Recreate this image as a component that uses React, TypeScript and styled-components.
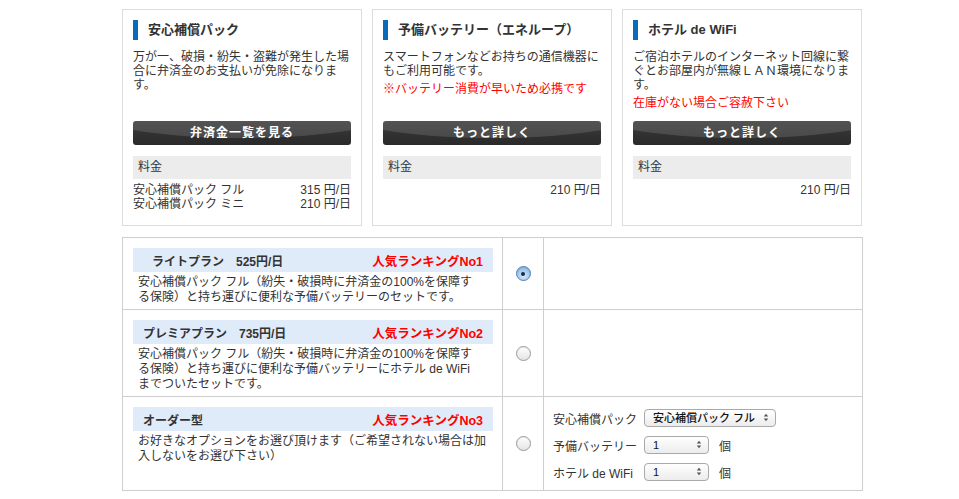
import styled, { createGlobalStyle } from 'styled-components';

const GlobalStyle = createGlobalStyle`
	html, body {
		margin: 0;
		padding: 0;
		background: #fff;
	}
	body {
		font-family: "Liberation Sans", "Noto Sans CJK JP", sans-serif;
		color: #333;
		font-size: 12px;
	}
`

interface Option {
	title: string;
	lines: string[];
	note?: string;
	button: string;
	fees: { name: string; price: string }[];
}

const options: Option[] = [
	{
		title: '安心補償パック',
		lines: ['万が一、破損・紛失・盗難が発生した場合に弁済金のお支払いが免除になります。'],
		button: '弁済金一覧を見る',
		fees: [
			{ name: '安心補償パック フル', price: '315 円/日' },
			{ name: '安心補償パック ミニ', price: '210 円/日' },
		],
	},
	{
		title: '予備バッテリー（エネループ）',
		lines: ['スマートフォンなどお持ちの通信機器にもご利用可能です。'],
		note: '※バッテリー消費が早いため必携です',
		button: 'もっと詳しく',
		fees: [{ name: '', price: '210 円/日' }],
	},
	{
		title: 'ホテル de WiFi',
		lines: ['ご宿泊ホテルのインターネット回線に繋ぐとお部屋内が無線ＬＡＮ環境になります。'],
		note: '在庫がない場合ご容赦下さい',
		button: 'もっと詳しく',
		fees: [{ name: '', price: '210 円/日' }],
	},
]

const plans = [
	{
		name: 'ライトプラン　525円/日',
		rank: '人気ランキングNo1',
		desc: [
			'安心補償パック フル（紛失・破損時に弁済金の100%を保障す',
			'る保険）と持ち運びに便利な予備バッテリーのセットです。',
		],
		indent: 19,
		checked: true,
	},
	{
		name: 'プレミアプラン　735円/日',
		rank: '人気ランキングNo2',
		desc: [
			'安心補償パック フル（紛失・破損時に弁済金の100%を保障す',
			'る保険）と持ち運びに便利な予備バッテリーにホテル de WiFi',
			'までついたセットです。',
		],
		indent: 10,
		checked: false,
	},
	{
		name: 'オーダー型',
		rank: '人気ランキングNo3',
		desc: [
			'お好きなオプションをお選び頂けます（ご希望されない場合は加',
			'入しないをお選び下さい）',
		],
		indent: 10,
		checked: false,
		order: true,
	},
]

const orderRows = [
	{ label: '安心補償パック', value: '安心補償パック フル', width: 132, unit: '' },
	{ label: '予備バッテリー', value: '1', width: 65, unit: '個' },
	{ label: 'ホテル de WiFi', value: '1', width: 65, unit: '個' },
]

const SelectArrows = () => (
	<svg width="6" height="9" viewBox="0 0 6 9">
		<path d="M3 0.8 L5.2 3.6 H0.8 Z" fill="#555" />
		<path d="M3 8.2 L5.2 5.4 H0.8 Z" fill="#555" />
	</svg>
)

export default function App() {
	return (
		<Page>
			<GlobalStyle />
			<Cards>
				{options.map((o) => (
					<Card key={o.title}>
						<CardTitle>{o.title}</CardTitle>
						<CardBody>
							{o.lines.map((l) => <p key={l}>{l}</p>)}
							{o.note && <Note>{o.note}</Note>}
						</CardBody>
						<DarkButton><span>{o.button}</span></DarkButton>
						<FeeHead>料金</FeeHead>
						<FeeList>
							{o.fees.map((f) => (
								<FeeRow key={f.price + f.name}>
									<span>{f.name}</span>
									<span>{f.price}</span>
								</FeeRow>
							))}
						</FeeList>
					</Card>
				))}
			</Cards>

			<PlanTable>
				<colgroup>
					<col style={{ width: 380 }} />
					<col style={{ width: 41 }} />
					<col style={{ width: 319 }} />
				</colgroup>
				<tbody>
					{plans.map((p) => (
						<tr key={p.name}>
							<PlanCell>
								<PlanBand $indent={p.indent}>
									<span>{p.name}</span>
									<Rank>{p.rank}</Rank>
								</PlanBand>
								<PlanDesc>
									{p.desc.map((line) => <span key={line}>{line}</span>)}
								</PlanDesc>
							</PlanCell>
							<RadioCell>
								<Radio $checked={p.checked} />
							</RadioCell>
							<OptionCell>
								{p.order && orderRows.map((r) => (
									<OptionRow key={r.label}>
										<OptionLabel>{r.label}</OptionLabel>
										<SelectWrap $width={r.width}>
											<FakeSelect defaultValue={r.value}>
												<option value={r.value}>{r.value}</option>
											</FakeSelect>
											<ArrowBox><SelectArrows /></ArrowBox>
										</SelectWrap>
										{r.unit && <Unit>{r.unit}</Unit>}
									</OptionRow>
								))}
							</OptionCell>
						</tr>
					))}
				</tbody>
			</PlanTable>
		</Page>
	)
}

const Page = styled.div`
	width: 740px;
	margin-left: 122px;
	padding-top: 9px;
`

const Cards = styled.div`
	display: grid;
	grid-template-columns: repeat(3, 240px);
	column-gap: 10px;
`

const Card = styled.div`
	box-sizing: border-box;
	height: 217px;
	border: 1px solid #dcdcdc;
	padding: 10px;
	display: flex;
	flex-direction: column;
`

const CardTitle = styled.h3`
	margin: 0;
	height: 20px;
	line-height: 20px;
	border-left: 5px solid #0a6bbd;
	padding-left: 10px;
	font-size: 13px;
	font-weight: bold;
	color: #333;
`

const CardBody = styled.div`
	height: 71px;
	padding-top: 10px;
	font-size: 12px;
	line-height: 14px;
	color: #333;

	p {
		margin: 0;
	}
`

const Note = styled.p`
	&& {
		margin-top: 4px;
	}
	color: #ff0000;
`

const DarkButton = styled.div`
	position: relative;
	overflow: hidden;
	height: 24px;
	line-height: 24px;
	border-radius: 3px;
	background: linear-gradient(#3a3a3a, #2a2a2a);
	color: #fff;
	font-weight: bold;
	font-size: 12px;
	letter-spacing: 1px;
	text-align: center;

	&::before {
		content: '';
		position: absolute;
		left: -25%;
		top: -190%;
		width: 150%;
		height: 260%;
		border-radius: 50%;
		background: rgba(255, 255, 255, 0.13);
	}

	span {
		position: relative;
	}
`

const FeeHead = styled.div`
	margin-top: 11px;
	height: 23px;
	line-height: 23px;
	background: #ececec;
	padding-left: 5px;
	font-size: 12px;
`

const FeeList = styled.div`
	margin-top: 4px;
	font-size: 12px;
	line-height: 14px;
`

const FeeRow = styled.div`
	display: flex;
	justify-content: space-between;
`

const PlanTable = styled.table`
	margin-top: 11px;
	width: 740px;
	table-layout: fixed;
	border-collapse: collapse;

	td {
		border: 1px solid #cfcfcf;
		vertical-align: top;
	}
`

const PlanCell = styled.td`
	padding: 10px 9px 4px 10px;
`

const PlanBand = styled.div<{ $indent: number }>`
	display: flex;
	justify-content: space-between;
	align-items: center;
	height: 24px;
	padding: 0 10px 0 ${(p) => p.$indent}px;
	background: #e0ebfa;
	font-size: 12px;
	font-weight: bold;
	color: #333;
`

const Rank = styled.span`
	color: #ff0000;
	font-size: 12.5px;
	font-weight: bold;
`

const PlanDesc = styled.p`
	margin: 3px 0 0;
	padding: 0 0 0 5px;
	display: flex;
	flex-direction: column;
	font-size: 12px;
	line-height: 15px;
	color: #333;

	span {
		white-space: nowrap;
	}
`

const RadioCell = styled.td`
	&& {
		vertical-align: middle;
		text-align: center;
	}
`

const Radio = styled.span<{ $checked: boolean }>`
	display: inline-flex;
	align-items: center;
	justify-content: center;
	vertical-align: middle;
	width: 13px;
	height: 13px;
	border-radius: 50%;
	border: 1px solid ${(p) => (p.$checked ? '#5a7fb0' : '#9a9a9a')};
	background: ${(p) =>
		p.$checked
			? 'radial-gradient(circle at 50% 70%, #d6e8fc, #8fbbea 75%)'
			: 'linear-gradient(#ffffff, #e4e4e4)'};
	box-shadow: inset 0 1px 1px rgba(0, 0, 0, 0.08);

	&::after {
		content: '';
		display: ${(p) => (p.$checked ? 'block' : 'none')};
		width: 4px;
		height: 4px;
		border-radius: 50%;
		background: #1b2a44;
	}
`

const OptionCell = styled.td`
	padding: 12px 10px 9px 9px;
`

const OptionRow = styled.div`
	display: flex;
	align-items: center;
	height: 18px;
	font-size: 12px;
	color: #333;

	& + & {
		margin-top: 9px;
	}
`

const OptionLabel = styled.span`
	width: 91px;
	flex: none;
	white-space: nowrap;
`

const Unit = styled.span`
	margin-left: 10px;
`

const SelectWrap = styled.span<{ $width: number }>`
	position: relative;
	display: inline-block;
	width: ${(p) => p.$width}px;
	height: 18px;
`

const FakeSelect = styled.select`
	appearance: none;
	-webkit-appearance: none;
	box-sizing: border-box;
	width: 100%;
	height: 18px;
	margin: 0;
	padding: 0 0 0 8px;
	border: 1px solid #a9a9a9;
	border-radius: 4px;
	background: linear-gradient(#ffffff, #ececec);
	font-family: "Liberation Sans", "Noto Sans CJK JP", sans-serif;
	font-size: 11px;
	font-weight: 500;
	color: #111;
	line-height: 16px;
`

const ArrowBox = styled.span`
	position: absolute;
	right: 7px;
	top: 4px;
	display: flex;
	pointer-events: none;
`
